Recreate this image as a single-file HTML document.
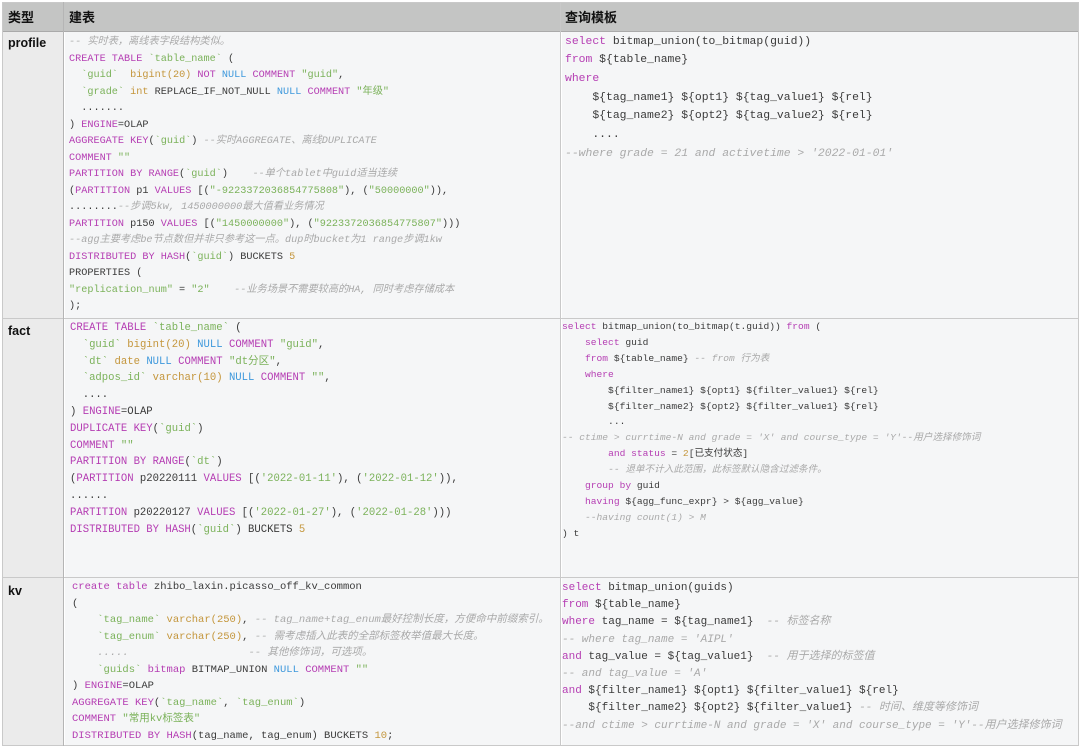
<!DOCTYPE html>
<html><head><meta charset="utf-8"><style>
html,body{margin:0;padding:0;width:1080px;height:747px;overflow:hidden;background:#fff}
.cell{position:absolute;background:#f5f6f7}
.lab{position:absolute;background:#ebebeb}
.hd{position:absolute;background:#c4c5c4;font-family:"Liberation Sans","Noto Sans CJK SC",sans-serif;font-weight:bold;font-size:13px;color:#111}
.ln{position:absolute;background:#c9c9c9}
.code{position:absolute;font-family:"Liberation Mono","Noto Sans CJK SC",monospace;white-space:pre;color:#3a3a3a}
.k{color:#b53db3}.s{color:#7bb25a}.n{color:#3d98dc}.t{color:#c4963c}.c{color:#a9a9a9;font-style:italic}
.lb{position:absolute;font-family:"Liberation Sans",sans-serif;font-weight:bold;font-size:12.5px;color:#111}
</style></head><body>
<div class="hd" style="left:2px;top:2px;width:1077px;height:29px"></div>
<div class="lab" style="left:2px;top:31px;width:62px;height:715px"></div>
<div class="cell" style="left:65px;top:32px;width:495px;height:286px"></div>
<div class="cell" style="left:562px;top:32px;width:517px;height:286px"></div>
<div class="cell" style="left:65px;top:319px;width:495px;height:258px"></div>
<div class="cell" style="left:562px;top:319px;width:517px;height:258px"></div>
<div class="cell" style="left:65px;top:578px;width:495px;height:168px"></div>
<div class="cell" style="left:562px;top:578px;width:517px;height:168px"></div>
<div class="ln" style="left:2px;top:2px;width:1077px;height:1px"></div>
<div class="ln" style="left:2px;top:31px;width:1077px;height:1px;background:#aaa"></div>
<div class="ln" style="left:2px;top:318px;width:1077px;height:1px"></div>
<div class="ln" style="left:2px;top:577px;width:1077px;height:1px"></div>
<div class="ln" style="left:2px;top:745px;width:1077px;height:1px"></div>
<div class="ln" style="left:2px;top:2px;width:1px;height:744px"></div>
<div class="ln" style="left:63px;top:2px;width:1px;height:744px;background:#b5b5b5"></div>
<div class="ln" style="left:560px;top:2px;width:1px;height:744px"></div>
<div class="ln" style="left:1078px;top:2px;width:1px;height:744px"></div>
<div class="hd" style="left:8px;top:7px;background:none">类型</div>
<div class="hd" style="left:69px;top:7px;background:none">建表</div>
<div class="hd" style="left:565px;top:7px;background:none">查询模板</div>
<div class="lb" style="left:8px;top:36px">profile</div>
<div class="lb" style="left:8px;top:324px">fact</div>
<div class="lb" style="left:8px;top:584px">kv</div>

<div class="code" style="left:69px;top:35px;font-size:10.2px;line-height:16.5px"><span class="c">-- 实时表，离线表字段结构类似。</span>
<span class="k">CREATE TABLE</span> <span class="s">`table_name`</span> (
  <span class="s">`guid`</span>  <span class="t">bigint(20)</span> <span class="k">NOT</span> <span class="n">NULL</span> <span class="k">COMMENT</span> <span class="s">"guid"</span>,
  <span class="s">`grade`</span> <span class="t">int</span> REPLACE_IF_NOT_NULL <span class="n">NULL</span> <span class="k">COMMENT</span> <span class="s">"年级"</span>
  .......
) <span class="k">ENGINE</span>=OLAP
<span class="k">AGGREGATE KEY</span>(<span class="s">`guid`</span>) <span class="c">--实时AGGREGATE、离线DUPLICATE</span>
<span class="k">COMMENT</span> <span class="s">""</span>
<span class="k">PARTITION BY RANGE</span>(<span class="s">`guid`</span>)    <span class="c">--单个tablet中guid适当连续</span>
(<span class="k">PARTITION</span> p1 <span class="k">VALUES</span> [(<span class="s">"-9223372036854775808"</span>), (<span class="s">"50000000"</span>)),
........<span class="c">--步调5kw, 1450000000最大值看业务情况</span>
<span class="k">PARTITION</span> p150 <span class="k">VALUES</span> [(<span class="s">"1450000000"</span>), (<span class="s">"9223372036854775807"</span>)))
<span class="c">--agg主要考虑be节点数但并非只参考这一点。dup时bucket为1 range步调1kw</span>
<span class="k">DISTRIBUTED BY HASH</span>(<span class="s">`guid`</span>) BUCKETS <span class="t">5</span>
PROPERTIES (
<span class="s">"replication_num"</span> = <span class="s">"2"</span>    <span class="c">--业务场景不需要较高的HA, 同时考虑存储成本</span>
);</div>

<div class="code" style="left:565px;top:32.6px;font-size:11.4px;line-height:18.7px"><span class="k">select</span> bitmap_union(to_bitmap(guid))
<span class="k">from</span> ${table_name}
<span class="k">where</span>
    ${tag_name1} ${opt1} ${tag_value1} ${rel}
    ${tag_name2} ${opt2} ${tag_value2} ${rel}
    ....
<span class="c">--where grade = 21 and activetime &gt; '2022-01-01'</span></div>

<div class="code" style="left:70px;top:320px;font-size:10.6px;line-height:16.8px"><span class="k">CREATE TABLE</span> <span class="s">`table_name`</span> (
  <span class="s">`guid`</span> <span class="t">bigint(20)</span> <span class="n">NULL</span> <span class="k">COMMENT</span> <span class="s">"guid"</span>,
  <span class="s">`dt`</span> <span class="t">date</span> <span class="n">NULL</span> <span class="k">COMMENT</span> <span class="s">"dt分区"</span>,
  <span class="s">`adpos_id`</span> <span class="t">varchar(10)</span> <span class="n">NULL</span> <span class="k">COMMENT</span> <span class="s">""</span>,
  ....
) <span class="k">ENGINE</span>=OLAP
<span class="k">DUPLICATE KEY</span>(<span class="s">`guid`</span>)
<span class="k">COMMENT</span> <span class="s">""</span>
<span class="k">PARTITION BY RANGE</span>(<span class="s">`dt`</span>)
(<span class="k">PARTITION</span> p20220111 <span class="k">VALUES</span> [(<span class="s">'2022-01-11'</span>), (<span class="s">'2022-01-12'</span>)),
......
<span class="k">PARTITION</span> p20220127 <span class="k">VALUES</span> [(<span class="s">'2022-01-27'</span>), (<span class="s">'2022-01-28'</span>)))
<span class="k">DISTRIBUTED BY HASH</span>(<span class="s">`guid`</span>) BUCKETS <span class="t">5</span></div>

<div class="code" style="left:562px;top:319px;font-size:9.6px;line-height:15.9px"><span class="k">select</span> bitmap_union(to_bitmap(t.guid)) <span class="k">from</span> (
    <span class="k">select</span> guid
    <span class="k">from</span> ${table_name} <span class="c">-- from 行为表</span>
    <span class="k">where</span>
        ${filter_name1} ${opt1} ${filter_value1} ${rel}
        ${filter_name2} ${opt2} ${filter_value1} ${rel}
        ...
<span class="c">-- ctime &gt; currtime-N and grade = 'X' and course_type = 'Y'--用户选择修饰词</span>
        <span class="k">and status</span> = <span class="t">2</span>[已支付状态]
        <span class="c">-- 退单不计入此范围，此标签默认隐含过滤条件。</span>
    <span class="k">group by</span> guid
    <span class="k">having</span> ${agg_func_expr} &gt; ${agg_value}
    <span class="c">--having count(1) &gt; M</span>
) t</div>

<div class="code" style="left:72px;top:579px;font-size:10.5px;line-height:16.5px"><span class="k">create table</span> zhibo_laxin.picasso_off_kv_common
(
    <span class="s">`tag_name`</span> <span class="t">varchar(250)</span>, <span class="c">-- tag_name+tag_enum最好控制长度，方便命中前缀索引。</span>
    <span class="s">`tag_enum`</span> <span class="t">varchar(250)</span>, <span class="c">-- 需考虑插入此表的全部标签枚举值最大长度。</span>
    <span class="c">.....                   -- 其他修饰词，可选项。</span>
    <span class="s">`guids`</span> <span class="k">bitmap</span> BITMAP_UNION <span class="n">NULL</span> <span class="k">COMMENT</span> <span class="s">""</span>
) <span class="k">ENGINE</span>=OLAP
<span class="k">AGGREGATE KEY</span>(<span class="s">`tag_name`</span>, <span class="s">`tag_enum`</span>)
<span class="k">COMMENT</span> <span class="s">"常用kv标签表"</span>
<span class="k">DISTRIBUTED BY HASH</span>(tag_name, tag_enum) BUCKETS <span class="t">10</span>;</div>

<div class="code" style="left:562px;top:580px;font-size:11px;line-height:17.2px"><span class="k">select</span> bitmap_union(guids)
<span class="k">from</span> ${table_name}
<span class="k">where</span> tag_name = ${tag_name1}  <span class="c">-- 标签名称</span>
<span class="c">-- where tag_name = 'AIPL'</span>
<span class="k">and</span> tag_value = ${tag_value1}  <span class="c">-- 用于选择的标签值</span>
<span class="c">-- and tag_value = 'A'</span>
<span class="k">and</span> ${filter_name1} ${opt1} ${filter_value1} ${rel}
    ${filter_name2} ${opt2} ${filter_value1} <span class="c">-- 时间、维度等修饰词</span>
<span class="c">--and ctime &gt; currtime-N and grade = 'X' and course_type = 'Y'--用户选择修饰词</span></div>
</body></html>
